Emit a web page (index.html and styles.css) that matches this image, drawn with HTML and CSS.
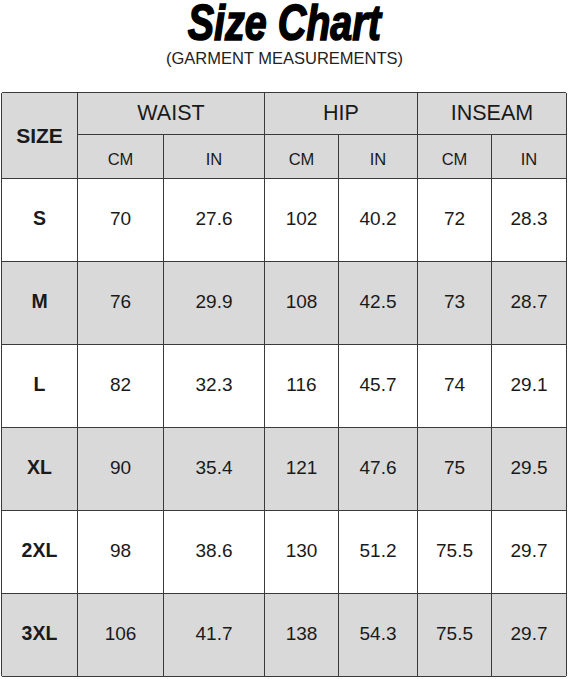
FILE: index.html
```html
<!DOCTYPE html>
<html lang="en">
<head>
<meta charset="utf-8">
<title>Size Chart</title>
<link rel="stylesheet" href="styles.css">
</head>
<body>
<div class="page">
  <header class="heading">
    <h1 class="title"><span class="title-text">Size Chart</span></h1>
    <p class="subtitle">(GARMENT MEASUREMENTS)</p>
  </header>
  <div class="chart">
    <div class="cell hd size-hd">SIZE</div>
    <div class="cell hd group g-waist">WAIST</div>
    <div class="cell hd group g-hip">HIP</div>
    <div class="cell hd group g-inseam">INSEAM</div>
    <div class="cell hd unit">CM</div>
    <div class="cell hd unit">IN</div>
    <div class="cell hd unit">CM</div>
    <div class="cell hd unit">IN</div>
    <div class="cell hd unit">CM</div>
    <div class="cell hd unit">IN</div>

    <div class="cell sz">S</div><div class="cell">70</div><div class="cell">27.6</div><div class="cell">102</div><div class="cell">40.2</div><div class="cell">72</div><div class="cell">28.3</div>
    <div class="cell sz alt">M</div><div class="cell alt">76</div><div class="cell alt">29.9</div><div class="cell alt">108</div><div class="cell alt">42.5</div><div class="cell alt">73</div><div class="cell alt">28.7</div>
    <div class="cell sz">L</div><div class="cell">82</div><div class="cell">32.3</div><div class="cell">116</div><div class="cell">45.7</div><div class="cell">74</div><div class="cell">29.1</div>
    <div class="cell sz alt">XL</div><div class="cell alt">90</div><div class="cell alt">35.4</div><div class="cell alt">121</div><div class="cell alt">47.6</div><div class="cell alt">75</div><div class="cell alt">29.5</div>
    <div class="cell sz">2XL</div><div class="cell">98</div><div class="cell">38.6</div><div class="cell">130</div><div class="cell">51.2</div><div class="cell">75.5</div><div class="cell">29.7</div>
    <div class="cell sz alt">3XL</div><div class="cell alt">106</div><div class="cell alt">41.7</div><div class="cell alt">138</div><div class="cell alt">54.3</div><div class="cell alt">75.5</div><div class="cell alt">29.7</div>
  </div>
</div>
</body>
</html>
```

FILE: styles.css
```css
html, body {
  margin: 0;
  padding: 0;
  background: #ffffff;
}

.page {
  width: 569px;
  height: 679px;
  font-family: "Liberation Sans", Arial, sans-serif;
  color: #1a1a1a;
}

.heading {
  height: 92px;
  display: flex;
  flex-direction: column;
  align-items: center;
}

.title {
  margin: 0;
  height: 46px;
  line-height: 46px;
  font-family: "Liberation Sans", Arial, sans-serif;
  font-weight: 700;
  font-style: italic;
  font-size: 50px;
  color: #000;
}

.title-text {
  display: inline-block;
  transform: scaleX(0.79);
  transform-origin: center;
  -webkit-text-stroke: 1.6px #000;
  margin-top: -3px;
}

.subtitle {
  margin: 2px 0 0 0;
  font-size: 16.5px;
  line-height: 20px;
  color: #222;
}

.chart {
  margin-left: 1px;
  width: 564px;
  display: grid;
  grid-template-columns: 75px 85px 100px 73px 78px 73px 74px;
  grid-template-rows: 41px 43px repeat(6, 82px);
  gap: 1px;
  background: #3a3a3a;
  border: 1px solid #3a3a3a;
  border-radius: 2px;
}

.cell {
  background: #ffffff;
  display: flex;
  align-items: center;
  justify-content: center;
  font-size: 19px;
  color: #1a1a1a;
  padding-bottom: 3px;
  box-sizing: border-box;
}

.hd {
  background: #d9d9d9;
  padding-bottom: 0;
}

.size-hd {
  grid-row: 1 / 3;
  font-weight: 700;
  font-size: 21px;
}

.group {
  grid-column: span 2;
  font-size: 21.5px;
}

.unit {
  font-size: 16.5px;
  padding-top: 5px;
}

.sz {
  font-weight: 700;
  font-size: 19.5px;
}

.alt {
  background: #d9d9d9;
}
```
